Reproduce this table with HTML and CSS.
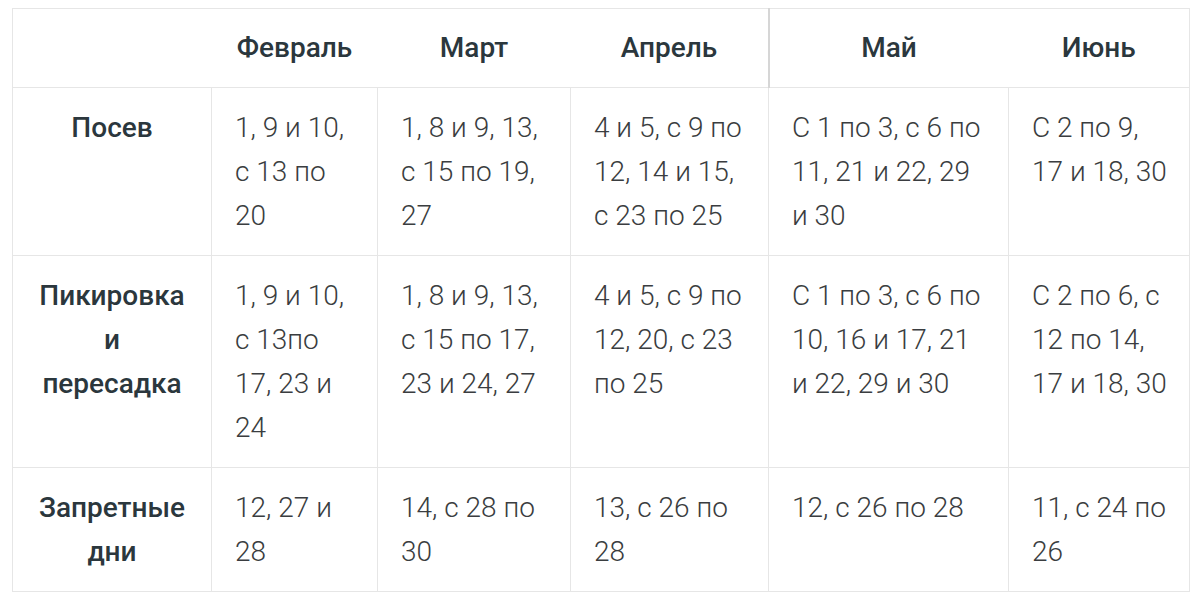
FILE: index.html
```html
<!DOCTYPE html>
<html lang="ru">
<head>
<meta charset="utf-8">
<link rel="stylesheet" href="styles.css">
</head>
<body>
<table class="cal">
  <colgroup>
    <col class="c0"><col class="c1"><col class="c2"><col class="c3"><col class="c4"><col class="c5">
  </colgroup>
  <thead>
    <tr>
      <th></th>
      <th>Февраль</th>
      <th>Март</th>
      <th class="sep">Апрель</th>
      <th>Май</th>
      <th>Июнь</th>
    </tr>
  </thead>
  <tbody>
    <tr>
      <th class="rh">Посев</th>
      <td>1, 9 и 10, с 13 по 20</td>
      <td>1, 8 и 9, 13, с 15 по 19, 27</td>
      <td>4 и 5, с 9 по 12, 14 и 15, с 23 по 25</td>
      <td>С 1 по 3, с 6 по 11, 21 и 22, 29 и 30</td>
      <td>С 2 по 9, 17 и 18, 30</td>
    </tr>
    <tr>
      <th class="rh">Пикировка и пересадка</th>
      <td>1, 9 и 10, с 13по 17, 23 и 24</td>
      <td>1, 8 и 9, 13, с 15 по 17, 23 и 24, 27</td>
      <td>4 и 5, с 9 по 12, 20, с 23 по 25</td>
      <td>С 1 по 3, с 6 по 10, 16 и 17, 21 и 22, 29 и 30</td>
      <td>С 2 по 6, с 12 по 14, 17 и 18, 30</td>
    </tr>
    <tr>
      <th class="rh">Запретные дни</th>
      <td>12, 27 и 28</td>
      <td>14, с 28 по 30</td>
      <td>13, с 26 по 28</td>
      <td>12, с 26 по 28</td>
      <td>11, с 24 по 26</td>
    </tr>
  </tbody>
</table>
</body>
</html>
```
FILE: styles.css
```css
html, body {
  margin: 0;
  padding: 0;
  background: #ffffff;
}
body {
  padding: 8px 12px 0 12px;
  font-family: Roboto, "Noto Sans", sans-serif;
}
.cal {
  border-collapse: collapse;
  table-layout: fixed;
  width: 1177px;
  border: 1px solid #e6e6e6;
}
.c0 { width: 199px; }
.c1 { width: 166px; }
.c2 { width: 193px; }
.c3 { width: 198px; }
.c4 { width: 240px; }
.c5 { width: 181px; }
.cal th,
.cal td {
  padding: 18px 23px 17px 23px;
  font-size: 28px;
  line-height: 44px;
  vertical-align: top;
}
.cal thead th {
  font-weight: 500;
  color: #2b373d;
  text-align: center;
  border-bottom: 1px solid #e6e6e6;
  padding-top: 17px;
  padding-bottom: 17px;
}
.cal thead th.sep {
  border-right: 2px solid #d6d6d6;
}
.cal tbody td {
  font-family: "Roboto Light", Roboto, "Noto Sans", sans-serif;
  font-weight: 300;
  color: #3a3d40;
  text-align: left;
  border: 1px solid #e6e6e6;
}
.cal tbody td:last-child {
  padding-right: 16px;
}
.cal tbody th.rh {
  font-weight: 500;
  color: #2b373d;
  text-align: center;
  border: 1px solid #e6e6e6;
}
```
